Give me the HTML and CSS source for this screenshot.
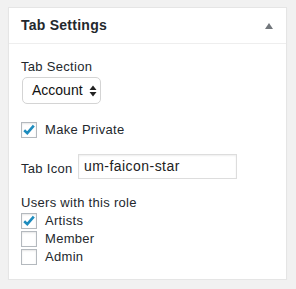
FILE: index.html
```html
<!DOCTYPE html>
<html>
<head>
<meta charset="utf-8">
<link rel="stylesheet" href="styles.css">
</head>
<body>
<div class="postbox">
  <div class="postbox-header">
    <h2 class="postbox-title">Tab Settings</h2>
    <span class="toggle-arrow"></span>
  </div>
  <div class="inside">
    <div class="field-label">Tab Section</div>
    <div class="select-box">
      <span class="select-value">Account</span>
      <svg class="select-arrows" width="8" height="12" viewBox="0 0 8 12"><path d="M4 0.5 L7.5 5 L0.5 5 Z M4 11.5 L7.5 7 L0.5 7 Z" fill="#222"/></svg>
    </div>
    <label class="check-row private-row">
      <span class="checkbox checked"><svg width="14" height="14" viewBox="0 0 14 14"><path d="M2.2 7.2 L5.3 10.2 L11.8 2.6" fill="none" stroke="#1e8cbe" stroke-width="2.6" stroke-linecap="butt" stroke-linejoin="miter"/></svg></span>
      <span class="check-text">Make Private</span>
    </label>
    <div class="icon-row">
      <span class="icon-label">Tab Icon</span>
      <span class="text-input">um-faicon-star</span>
    </div>
    <div class="field-label roles-label">Users with this role</div>
    <div class="roles">
      <label class="check-row">
        <span class="checkbox checked"><svg width="14" height="14" viewBox="0 0 14 14"><path d="M2.2 7.2 L5.3 10.2 L11.8 2.6" fill="none" stroke="#1e8cbe" stroke-width="2.6" stroke-linecap="butt" stroke-linejoin="miter"/></svg></span>
        <span class="check-text">Artists</span>
      </label>
      <label class="check-row">
        <span class="checkbox"></span>
        <span class="check-text">Member</span>
      </label>
      <label class="check-row">
        <span class="checkbox"></span>
        <span class="check-text">Admin</span>
      </label>
    </div>
  </div>
</div>
</body>
</html>
```
FILE: styles.css
```css
html, body {
  margin: 0;
  padding: 0;
}
body {
  background: #f1f1f1;
  font-family: "Liberation Sans", Arial, sans-serif;
  color: #23282d;
  font-size: 13px;
  letter-spacing: 0.3px;
  padding: 7px 9px 0 8px;
}
.postbox {
  background: #fff;
  border: 1px solid #e5e5e5;
  box-shadow: 0 1px 1px rgba(0,0,0,0.04);
  width: 277px;
}
.postbox-header {
  display: flex;
  align-items: center;
  justify-content: space-between;
  border-bottom: 1px solid #eee;
  padding: 8px 12px;
  height: 19px;
}
.postbox-title {
  margin: 0;
  font-size: 14px;
  font-weight: bold;
  line-height: 19px;
  letter-spacing: 0.25px;
  color: #23282d;
}
.toggle-arrow {
  width: 0;
  height: 0;
  border-left: 4px solid transparent;
  border-right: 4px solid transparent;
  border-bottom: 6px solid #72777c;
  margin-right: 1px;
  margin-top: 1px;
}
.inside {
  padding: 14px 12px 14px 12px;
}
.field-label {
  line-height: 18px;
  color: #23282d;
}
.select-box {
  margin-top: 1px;
  margin-left: 1px;
  height: 25px;
  border: 1px solid #d4d4d4;
  border-radius: 5px;
  display: flex;
  align-items: center;
  justify-content: space-between;
  padding: 0 3px 0 9px;
  box-sizing: content-box;
  width: 65px;
  font-size: 14px;
  letter-spacing: 0;
  color: #111;
}
.select-value {
  line-height: 25px;
}
.select-arrows {
  display: block;
}
.check-row {
  display: flex;
  align-items: center;
  height: 16px;
}
.private-row {
  margin-top: 18px;
}
.checkbox {
  box-sizing: border-box;
  width: 16px;
  height: 16px;
  border: 1px solid #b4b9be;
  background: #fff;
  box-shadow: inset 0 1px 2px rgba(0,0,0,0.1);
  display: flex;
  align-items: center;
  justify-content: center;
  margin-right: 8px;
  flex: none;
}
.check-text {
  line-height: 16px;
  color: #23282d;
}
.icon-row {
  margin-top: 16px;
  display: flex;
  align-items: center;
}
.icon-label {
  width: 57px;
  flex: none;
  padding-top: 4px;
}
.text-input {
  box-sizing: border-box;
  width: 159px;
  height: 25px;
  border: 1px solid #ddd;
  box-shadow: inset 0 1px 2px rgba(0,0,0,0.07);
  font-size: 14px;
  letter-spacing: 0.45px;
  line-height: 23px;
  padding: 0 5px;
  color: #222;
}
.roles-label {
  margin-top: 15px;
}
.roles {
  display: flex;
  flex-direction: column;
  gap: 2px;
  margin-top: 1px;
}
```
